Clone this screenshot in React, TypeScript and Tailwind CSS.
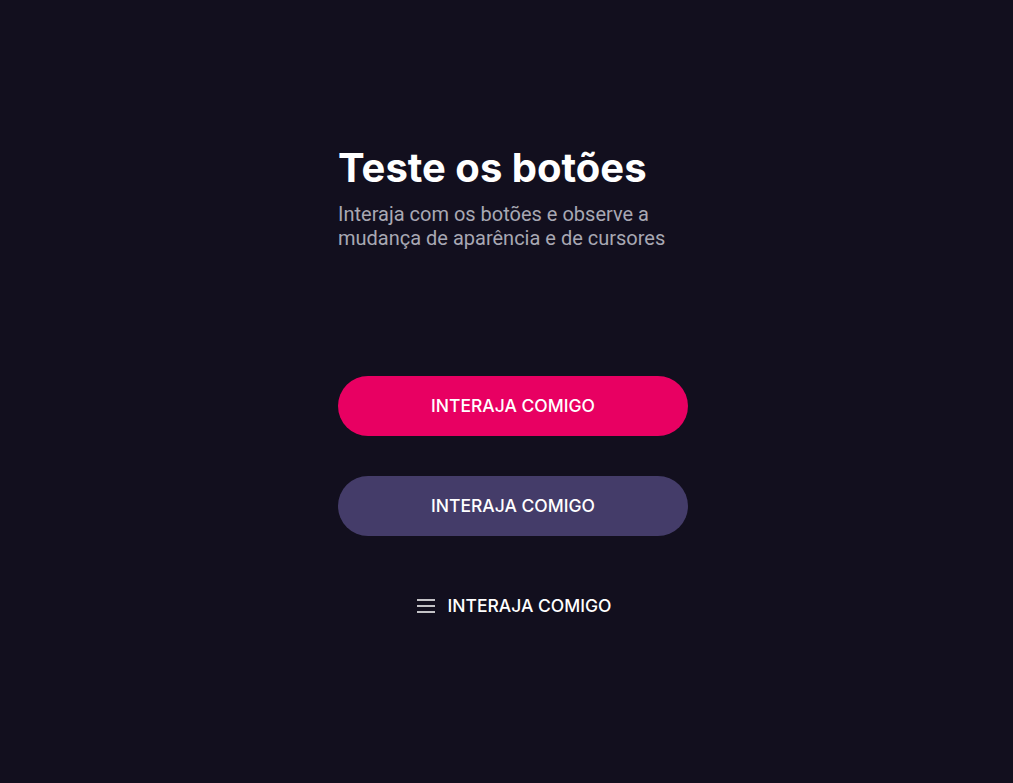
export default function App() {
  return (
    <div className="min-h-screen w-full bg-[#120f1e] flex justify-center pl-[13px] pt-[144px] font-[Roboto,'Noto_Sans',sans-serif]">
      <div className="w-[350px] flex flex-col">
        <h1 className="font-[Inter,sans-serif] text-[40px] leading-[48px] font-bold text-white">Teste os botões</h1>
        <p className="mt-[10px] text-[20px] leading-6 text-[#a8a8b3]">
          Interaja com os botões e observe a mudança de aparência e de cursores
        </p>

        <div className="mt-[126px] flex flex-col gap-10 font-[Inter,sans-serif] text-[17.5px] font-medium text-white uppercase">
          <button className="h-[60px] w-full rounded-full bg-[#e80062] uppercase cursor-pointer">
            Interaja comigo
          </button>
          <button className="h-[60px] w-full rounded-full bg-[#443c69] uppercase cursor-pointer">
            Interaja comigo
          </button>
          <button className="h-[60px] w-full flex items-center justify-center gap-3 pl-[3px] uppercase cursor-pointer">
            <svg width="18" height="14" viewBox="0 0 18 14" fill="none" stroke="currentColor" strokeWidth="1.5">
              <line x1="0" y1="1" x2="18" y2="1" />
              <line x1="0" y1="7" x2="18" y2="7" />
              <line x1="0" y1="13" x2="18" y2="13" />
            </svg>
            Interaja comigo
          </button>
        </div>
      </div>
    </div>
  );
}
